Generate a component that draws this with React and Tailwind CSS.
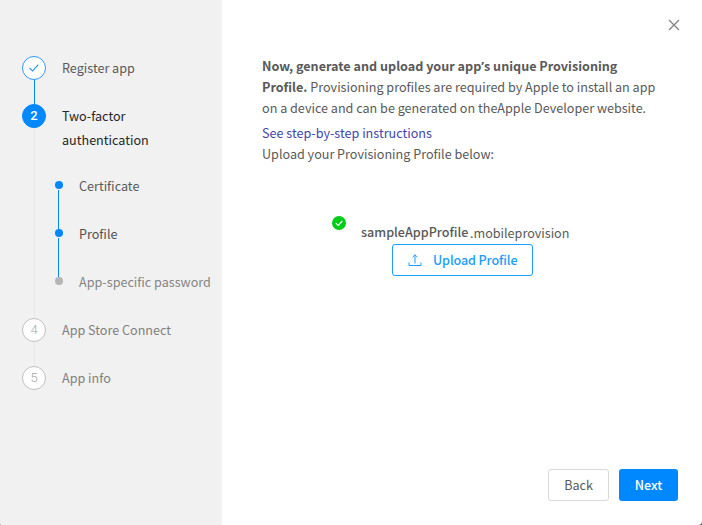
import React from "react";

const CHECK = "M1.4 5.8 L4.6 9 L10.2 2.6";

function Step({ badge, badgeClass, line, height, children }) {
  return (
    <li className={`flex ${height}`}>
      <div className="flex w-6 shrink-0 flex-col items-center">
        <span
          className={`flex h-6 w-6 shrink-0 items-center justify-center rounded-full border pb-px font-[Roboto,sans-serif] text-[13px] leading-none ${badgeClass}`}
        >
          {badge}
        </span>
        {line && <span className={`w-px flex-1 ${line}`} />}
      </div>
      <div className="ml-4 min-w-0 flex-1">{children}</div>
    </li>
  );
}

function SubStep({ label, dot, text, line }) {
  return (
    <li className={`flex ${line ? "h-12" : "h-6"}`}>
      <div className="flex w-2 shrink-0 flex-col pt-[7px]">
        <span className={`h-2 w-2 shrink-0 rounded-full ${dot}`} />
        {line && <span className="-mb-[7px] ml-[3px] mt-px w-px flex-1 bg-[#0088ff]" />}
      </div>
      <span className={`ml-4 whitespace-nowrap ${text}`}>{label}</span>
    </li>
  );
}

export default function App() {
  return (
    <div className="h-[525px] w-[702px] bg-[#606060]">
      <div className="flex h-full overflow-hidden rounded-bl-[2px] rounded-br-[4px] bg-white font-['Noto_Sans_CJK_SC',sans-serif] text-[12.6px] text-[#595959]">
        <aside className="w-[222px] shrink-0 bg-[#f1f1f1] pl-[22px] pt-14 leading-6">
          <ol>
            <Step
              height="h-12"
              line="bg-[#0088ff]"
              badgeClass="border-[#2b98fb] bg-white text-[#1890ff]"
              badge={
                <svg width="12" height="12" viewBox="0 0 12 12" fill="none" stroke="currentColor" strokeWidth="1.1">
                  <path d={CHECK} />
                </svg>
              }
            >
              Register app
            </Step>
            <Step
              height="h-[214px]"
              line="bg-[#e8e8e8]"
              badgeClass="border-[#0088ff] bg-[#0088ff] font-medium text-white"
              badge="2"
            >
              <p className="text-[#262626]">
                Two-factor
                <br />
                authentication
              </p>
              <ul className="-ml-[7px] mt-[22px]">
                <SubStep label="Certificate" dot="bg-[#0088ff]" text="text-[#595959]" line />
                <SubStep label="Profile" dot="bg-[#0088ff]" text="text-[#505050]" line />
                <SubStep label="App-specific password" dot="bg-[#b5b5b5]" text="text-[#858585]" />
              </ul>
            </Step>
            <Step height="h-12" line="bg-[#e8e8e8]" badgeClass="border-[#bfbfbf] bg-white font-light text-[#a8a8a8]" badge="4">
              <span className="text-[#808080]">App Store Connect</span>
            </Step>
            <Step height="h-6" badgeClass="border-[#bfbfbf] bg-white font-light text-[#a8a8a8]" badge="5">
              <span className="text-[#808080]">App info</span>
            </Step>
          </ol>
        </aside>
        <main className="flex flex-1 flex-col">
          <header className="flex h-[55px] justify-end pr-[22px] pt-[19px]">
            <svg width="12" height="12" viewBox="0 0 12 12" fill="none" stroke="#858585" strokeWidth="1.4">
              <path d="M1 1 L11 11 M11 1 L1 11" />
            </svg>
          </header>
          <section className="pl-10 leading-[21px]">
            <p className="whitespace-nowrap">
              <b className="font-bold">
                Now, generate and upload your app<span className="font-['Open_Sans',sans-serif] leading-none">’</span>s unique Provisioning
              </b>
              <br />
              <b className="font-bold">Profile.</b> Provisioning profiles are required by Apple to install an app
              <br />
              on a device and can be generated on theApple Developer website.
            </p>
            <p className="mt-1 text-[#3f46ad]">See step-by-step instructions</p>
            <p>Upload your Provisioning Profile below:</p>
          </section>
          <section className="mt-[51px] pl-[110px]">
            <div className="flex h-[29px]">
              <svg className="mt-px shrink-0" width="14" height="14" viewBox="0 0 14 14">
                <circle cx="7" cy="7" r="7" fill="#00cc1b" />
                <path d="M3.8 7.2 L6.1 9.4 L10.3 5" fill="none" stroke="white" strokeWidth="1.1" />
              </svg>
              <span className="ml-[15px] mt-[6px] w-[108px] font-medium leading-[21px]">sampleAppProfile</span>
              <span className="ml-[1px] mt-[7px] leading-[21px]">.mobileprovision</span>
            </div>
            <button className="ml-[60px] flex h-8 w-[141px] items-center rounded-[3px] border border-[#1b9cfe] pl-[15px] text-[#1b9cfe]">
              <svg width="14" height="13" viewBox="0 0 14 13" fill="none" stroke="currentColor" strokeWidth="1">
                <path d="M1 8.5 V11.5 H13 V8.5 M7 9.5 V0.8 M4.6 3.2 L7 0.8 L9.4 3.2" />
              </svg>
              <span className="ml-[11px] whitespace-nowrap font-medium tracking-[-0.13px]">Upload Profile</span>
            </button>
          </section>
          <footer className="mb-6 mr-6 mt-auto flex justify-end gap-[10px]">
            <button className="h-8 w-[61px] rounded-[3px] border border-[#d9d9d9]">Back</button>
            <button className="h-8 w-[59px] rounded-[3px] bg-[#0088ff] font-medium text-white">Next</button>
          </footer>
        </main>
      </div>
    </div>
  );
}
